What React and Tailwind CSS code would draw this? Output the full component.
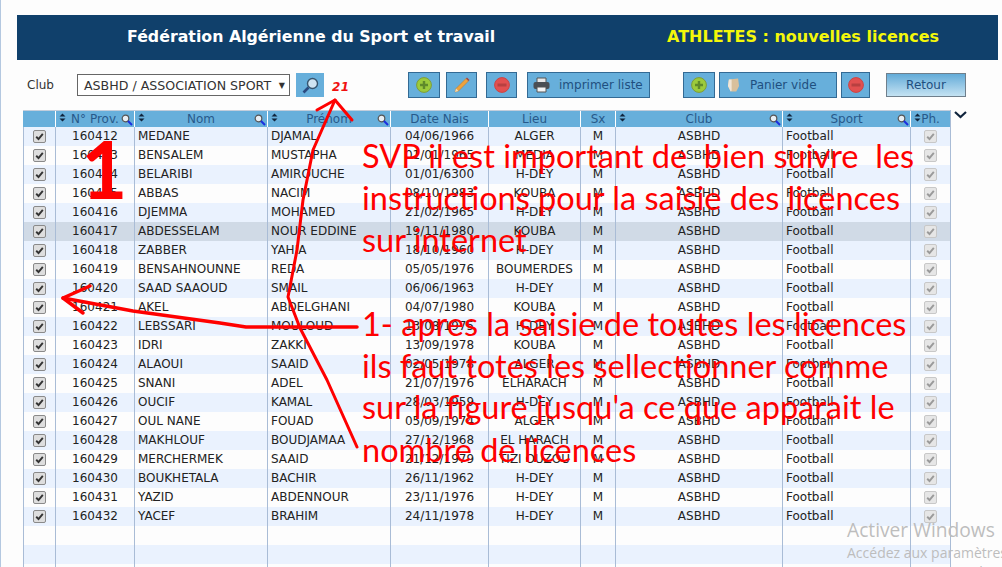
const ROWS = [
  ["160412", "MEDANE", "DJAMAL", "04/06/1966", "ALGER"],
  ["160413", "BENSALEM", "MUSTAPHA", "01/01/1965", "MEDIA"],
  ["160414", "BELARIBI", "AMIROUCHE", "01/01/6300", "H-DEY"],
  ["160415", "ABBAS", "NACIM", "08/10/1983", "KOUBA"],
  ["160416", "DJEMMA", "MOHAMED", "21/02/1965", "H-DEY"],
  ["160417", "ABDESSELAM", "NOUR EDDINE", "19/11/1980", "KOUBA"],
  ["160418", "ZABBER", "YAHIA", "18/10/1960", "H-DEY"],
  ["160419", "BENSAHNOUNNE", "REDA", "05/05/1976", "BOUMERDES"],
  ["160420", "SAAD SAAOUD", "SMAIL", "06/06/1963", "H-DEY"],
  ["160421", "AKEL", "ABDELGHANI", "04/07/1980", "KOUBA"],
  ["160422", "LEBSSARI", "MOULOUD", "13/08/1975", "H-DEY"],
  ["160423", "IDRI", "ZAKKI", "13/09/1978", "KOUBA"],
  ["160424", "ALAOUI", "SAAID", "02/05/1978", "ALGER"],
  ["160425", "SNANI", "ADEL", "21/07/1976", "ELHARACH"],
  ["160426", "OUCIF", "KAMAL", "28/03/1959", "H-DEY"],
  ["160427", "OUL NANE", "FOUAD", "05/09/1974", "ALGER"],
  ["160428", "MAKHLOUF", "BOUDJAMAA", "27/12/1968", "EL HARACH"],
  ["160429", "MERCHERMEK", "SAAID", "21/12/1979", "TIZI OUZOU"],
  ["160430", "BOUKHETALA", "BACHIR", "26/11/1962", "H-DEY"],
  ["160431", "YAZID", "ABDENNOUR", "23/11/1976", "H-DEY"],
  ["160432", "YACEF", "BRAHIM", "24/11/1978", "H-DEY"],
];

const GRID = "grid grid-cols-[32px_79px_133px_123px_98px_92px_35px_167px_128px_40px]";
const CELL = "border-l border-[#a9bcd6] h-[19px] leading-[19px] truncate";

function Sort() {
  return (
    <svg width="7" height="9" viewBox="0 0 7 9" className="absolute left-[3px] top-[2px]">
      <path d="M0.5 3.5 L3.5 0.5 L6.5 3.5Z M0.5 5.5 L3.5 8.5 L6.5 5.5Z" fill="#10243c" />
    </svg>
  );
}

function Loupe() {
  return (
    <svg width="12" height="12" viewBox="0 0 12 12" className="absolute right-[1px] top-[3px]">
      <circle cx="4.5" cy="4.5" r="3.3" fill="#e8eef4" stroke="#555" strokeWidth="1.2" />
      <path d="M7 7 L11 11" stroke="#1a2ee0" strokeWidth="2" />
    </svg>
  );
}

function Head({ label, sort, loupe }) {
  return (
    <div className="relative h-[16px] leading-[17px] border-l border-white text-center text-[#27598a] first:border-l-0">
      {sort && <Sort />}
      {label}
      {loupe && <Loupe />}
    </div>
  );
}

function Check({ off }) {
  return (
    <span className={`mx-auto mt-[3px] flex h-[13px] w-[13px] items-center justify-center rounded-[2px] border ${off ? "border-[#c8c8c8] bg-[#e6e6e6]" : "border-[#8a8a8a] bg-[#dedede]"}`}>
      <svg width="9" height="9" viewBox="0 0 9 9">
        <path d="M1.2 4.8 L3.5 7 L7.8 1.8" fill="none" stroke={off ? "#9a9a9a" : "#333"} strokeWidth="1.9" />
      </svg>
    </span>
  );
}

function Plus() {
  return (
    <svg width="16" height="16" viewBox="0 0 16 16">
      <circle cx="8" cy="8" r="7.4" fill="#9ccb3c" stroke="#7d9c3a" />
      <path d="M8 4 V12 M4 8 H12" stroke="#5f8a2b" strokeWidth="2.4" />
    </svg>
  );
}

function Minus() {
  return (
    <svg width="16" height="16" viewBox="0 0 16 16">
      <circle cx="8" cy="8" r="7.4" fill="#e25050" stroke="#cc4444" />
      <path d="M3.5 8 H12.5" stroke="#b84040" strokeWidth="3" />
    </svg>
  );
}

function Btn({ children, className = "" }) {
  return (
    <div className={`flex h-[26px] items-center justify-center border border-[#336a94] bg-[#67afdb] text-[#1f4f80] ${className}`}>
      {children}
    </div>
  );
}

export default function App() {
  return (
    <div className="relative h-[567px] w-[1002px] overflow-hidden border-l border-[#b4c8e0] bg-[#fdfdfd] font-['DejaVu_Sans',sans-serif] text-[12px]">
      <div className="ml-[16px] mt-[15px] flex h-[45px] w-[981px] items-center bg-[#10406b] pb-[2px] font-bold">
        <div className="ml-[110px] w-[540px] text-[15.8px] text-white">Fédération Algérienne du Sport et travail</div>
        <div className="text-[16px] text-[#f4f70a]">ATHLETES : nouvelles licences</div>
      </div>

      <div className="mt-[12px] ml-[26px] flex h-[26px] items-center">
        <span className="w-[50px] text-[#333]">Club</span>
        <div className="flex h-[22px] w-[213px] items-center justify-between border border-[#666] bg-white pl-[6px] pr-[4px] pt-[2px] text-[12.6px] text-[#333]">
          ASBHD / ASSOCIATION SPORT <span className="text-[8px]">▼</span>
        </div>
        <div className="ml-[6px] flex h-[24px] w-[28px] items-center justify-center bg-[#67afdb]">
          <svg width="17" height="17" viewBox="0 0 17 17">
            <circle cx="10.5" cy="6.5" r="5" fill="#cfe4f2" stroke="#37556f" strokeWidth="1.4" />
            <path d="M6.5 10.5 L1.5 15.5" stroke="#2b4a80" strokeWidth="2.6" />
          </svg>
        </div>
        <span className="ml-[8px] mt-[4px] w-[76px] text-[12px] font-bold italic tracking-[0.5px] text-[#f01010]">21</span>
        <Btn className="w-[32px]"><Plus /></Btn>
        <Btn className="ml-[6px] w-[31px]">
          <svg width="18" height="18" viewBox="0 0 18 18">
            <path d="M2 16 L3 12.5 L13 2.5 L15.5 5 L5.5 15Z" fill="#eda23c" stroke="#b9772a" strokeWidth="0.5" />
            <path d="M13 2.5 L15.5 5 L16.5 4 L14 1.5Z" fill="#a8403c" />
            <path d="M2 16 L3 12.5 L5.5 15Z" fill="#f2dcb8" />
          </svg>
        </Btn>
        <Btn className="ml-[9px] w-[31px]"><Minus /></Btn>
        <Btn className="ml-[10px] w-[123px] justify-start gap-[9px] pl-[5px]">
          <svg width="17" height="16" viewBox="0 0 17 16">
            <path d="M4 1 H13 V6 H4Z" fill="#e8e8e8" stroke="#555" />
            <rect x="0.5" y="5" width="16" height="7" rx="2" fill="#4b4f54" />
            <path d="M4 10 H13 V15 H4Z" fill="#f4f4f4" stroke="#555" />
          </svg>
          imprimer liste
        </Btn>
        <Btn className="ml-[33px] w-[32px]"><Plus /></Btn>
        <Btn className="ml-[4px] w-[118px] justify-start gap-[10px] pl-[7px]">
          <svg width="13" height="16" viewBox="0 0 14 16">
            <path d="M2 2 L12 1 L13 9 L10 15 H4 L1 9Z" fill="#d8c09c" />
            <path d="M2 2 L5 2 L5 14 L4 15 L1 9Z" fill="#f0e6d8" />
          </svg>
          Panier vide
        </Btn>
        <Btn className="ml-[4px] w-[29px]"><Minus /></Btn>
        <div className="ml-[16px] flex h-[24px] w-[80px] items-center justify-center border border-[#6f7f8c] bg-gradient-to-b from-[#62abd8] to-[#c4e2f2] text-[#1f4f80]">
          Retour
        </div>
      </div>

      <div className="relative mt-[12px] ml-[22px] w-[928px] border-r border-[#a9bcd6]">
        <div className={`${GRID} border-t border-[#c3cedc] bg-[#67afdb]`}>
          <Head label="" />
          <Head label="N° Prov." sort loupe />
          <Head label="Nom" sort loupe />
          <Head label="Prénom" sort loupe />
          <Head label="Date Nais" />
          <Head label="Lieu" />
          <Head label="Sx" />
          <Head label="Club" sort loupe />
          <Head label="Sport" sort loupe />
          <Head label="Ph." sort />
        </div>
        {ROWS.map((r, i) => (
          <div key={r[0]} className={`${GRID} ${i === 5 ? "bg-[#d0dae6]" : i % 2 ? "bg-[#fdfdfd]" : "bg-[#eaf2fe]"} text-[#222]`}>
            <div className={CELL}><Check /></div>
            <div className={`${CELL} text-center`}>{r[0]}</div>
            <div className={`${CELL} pl-[3px]`}>{r[1]}</div>
            <div className={`${CELL} pl-[3px]`}>{r[2]}</div>
            <div className={`${CELL} text-center`}>{r[3]}</div>
            <div className={`${CELL} text-center`}>{r[4]}</div>
            <div className={`${CELL} text-center`}>M</div>
            <div className={`${CELL} text-center`}>ASBHD</div>
            <div className={`${CELL} pl-[3px]`}>Football</div>
            <div className={CELL}><Check off /></div>
          </div>
        ))}
        {[0, 1, 2].map((i) => (
          <div key={i} className={`${GRID} ${i === 1 ? "bg-[#eaf2fe]" : "bg-[#fdfdfd]"}`}>
            {Array.from({ length: 10 }, (_, c) => <div key={c} className={CELL} />)}
          </div>
        ))}
        <svg width="13" height="8" viewBox="0 0 13 8" className="absolute -right-[17px] top-[1px]">
          <path d="M1 1 L6.5 6 L12 1" fill="none" stroke="#10243c" strokeWidth="2.2" />
        </svg>
      </div>

      <svg width="1002" height="567" viewBox="0 0 1002 567" className="pointer-events-none absolute left-[-1px] top-0">
        <g fill="none" stroke="#ff0000" strokeLinecap="round" strokeLinejoin="round">
          <path strokeWidth="3.5" d="M357 327 L246 327 L220 323 L133 311 L63 298" />
          <path strokeWidth="3.5" d="M90 286 L63 298 L83 313" />
          <path strokeWidth="3" d="M357 447 L327 380 L300 328 L288 297 L297 250 L303 200 L313 150 L335 100" />
          <path strokeWidth="3" d="M317 110 L335 100 L352 120" />
        </g>
      </svg>
      <div className="pointer-events-none absolute inset-0 whitespace-pre font-['Lato',sans-serif] text-[32.5px] leading-none text-[#ff0000]">
        <div className="absolute left-[80px] top-[128px] text-[80px] font-bold">1</div>
        <div className="absolute left-[361px] top-[140px]">SVP il est important de  bien suivre  les</div>
        <div className="absolute left-[361px] top-[182px]">instructions pour la saisie des licences</div>
        <div className="absolute left-[361px] top-[224px]">sur internet</div>
        <div className="absolute left-[361px] top-[308px]">1- apres la saisie de toutes les licences</div>
        <div className="absolute left-[361px] top-[350px]">ils faut totes les sellectionner comme</div>
        <div className="absolute left-[361px] top-[391px]">sur la figure jusqu'a ce que apparait le</div>
        <div className="absolute left-[361px] top-[434px]">nombre de licences</div>
      </div>

      <div className="pointer-events-none absolute left-[846px] top-[518px] whitespace-nowrap font-['Open_Sans',sans-serif] text-[#bdbdbd]">
        <div className="text-[19.2px] leading-[24px]">Activer Windows</div>
        <div className="text-[14px] leading-[21px]">Accédez aux paramètres</div>
        <div className="ml-[20px] text-[14px] leading-[18px]">pour activer Windows.</div>
      </div>
    </div>
  );
}
